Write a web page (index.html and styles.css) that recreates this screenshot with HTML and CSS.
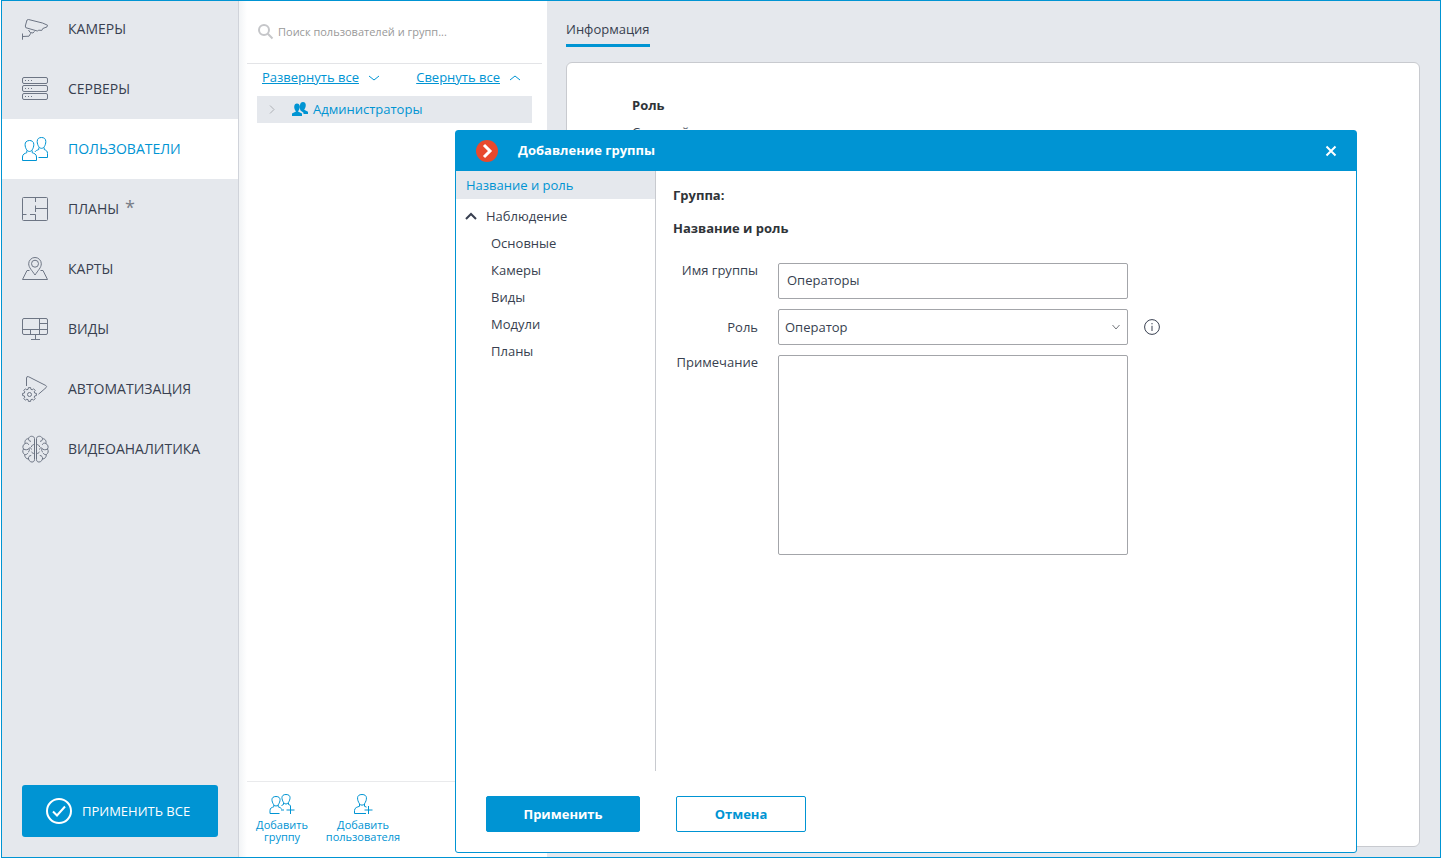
FILE: index.html
```html
<!DOCTYPE html>
<html lang="ru">
<head>
<meta charset="utf-8">
<title>Пользователи</title>
<link rel="stylesheet" href="styles.css">
</head>
<body>
<svg class="sprite" aria-hidden="true">
  <symbol id="users" viewBox="0 0 28 28">
    <path d="M8.500 5.500c2 0 4.300 1 4.300 3.800 0 2.200-.6 4-1.600 5.500-1.500 2.200-4 2.200-5.500 0-1-1.500-1.600-3.300-1.600-5.200 0-2.300 1.200-3.900 4.400-4.100zM5.800 15.500v2.200c-2 .8-4.300 1.300-4.300 4.300v3.500h14v-3.500c0-3-2.300-3.500-4.300-4.300v-2.200"/>
    <path d="M20.500 2.500c2.500 0 4.300 1.200 4.300 4 0 2-.6 3.800-1.500 5.200-1.500 2.200-4 2.200-5.500 0-.9-1.400-1.600-3.200-1.600-5.200 0-2.800 1.800-4 4.300-4zM17.800 12.500v2c-1.600.7-3 1-3.800 2.300M23.200 12.500v2c2 .8 3.300 1.500 3.300 4v4h-9"/>
  </symbol>
</svg>

<div class="app">
  <aside class="sidebar">
    <nav class="menu">
      <a class="menu-item" href="#"><svg class="menu-icon" viewBox="0 0 28 28"><path d="M7.500 4.500 21.500 8l5 2.200-.5 1.700-4.200 1.600-1 1.900-3-.2-1.500.8L4.800 12.700 4.300 11 6 5zM7.500 15l1.700 2.500 2.800.5 1.500-1.700M9.800 18.200l-1.800 3-6.500.3M1.500 18.500v6.200"/></svg>КАМЕРЫ</a>
      <a class="menu-item" href="#"><svg class="menu-icon" viewBox="0 0 28 28"><rect x="1.500" y="2.500" width="25" height="6" rx="1.500"/><rect x="1.500" y="10.500" width="25" height="6" rx="1.500"/><rect x="1.500" y="18.500" width="25" height="6" rx="1.500"/><path d="M4 5.500h1M7 5.500h1M10 5.500h1M4 13.500h1M7 13.500h1M10 13.500h1M4 21.500h1M7 21.500h1M10 21.500h1"/></svg>СЕРВЕРЫ</a>
      <a class="menu-item active" href="#" aria-current="page"><svg class="menu-icon"><use href="#users"/></svg>ПОЛЬЗОВАТЕЛИ</a>
      <a class="menu-item" href="#"><svg class="menu-icon" viewBox="0 0 28 28"><rect x="1.500" y="2.500" width="25" height="23" rx="1"/><path d="M14.500 2.500v4.500M14.500 10.500v6.500M14.500 13.500h12M1.500 19.500h4M9 19.500h5.500v6"/></svg>ПЛАНЫ <span class="mark">*</span></a>
      <a class="menu-item" href="#"><svg class="menu-icon" viewBox="0 0 28 28"><path d="M14 20C11 15.500 7.700 12.500 7.700 8.800a6.300 6.300 0 0 1 12.600 0c0 3.700-3.300 6.700-6.300 11.200zM8.500 15.500H6l-4.500 9h25l-4.500-9h-2.500"/><circle cx="14" cy="8.700" r="3.500"/></svg>КАРТЫ</a>
      <a class="menu-item" href="#"><svg class="menu-icon" viewBox="0 0 28 28"><rect x="1.500" y="3.500" width="25" height="16" rx="1.500"/><path d="M18.500 3.500v16M18.500 8.500h8M1.500 14.500h25M9.500 14.500v5M14.500 19.500v5M10 24.500h9"/></svg>ВИДЫ</a>
      <a class="menu-item" href="#"><svg class="menu-icon" viewBox="0 0 28 28"><path d="M5.500 11V3q0-2 2-1.300L24.800 10.500q1.500 1 .2 2.200l-7.500 6.500"/><g transform="translate(8.500 19.500)"><path d="M6.900-1.100v2.200L5.200 1.400 4.700 2.700 5.700 4.100 4.100 5.700 2.700 4.700 1.400 5.200 1.100 6.900h-2.200L-1.400 5.200-2.700 4.700-4.100 5.700-5.700 4.100-4.700 2.700-5.200 1.400-6.900 1.100v-2.200L-5.200-1.400-4.700-2.700-5.700-4.100-4.100-5.700-2.700-4.700-1.400-5.200-1.100-6.900h2.200L1.400-5.200 2.700-4.700 4.100-5.700 5.700-4.100 4.700-2.700 5.200-1.400z"/><circle r="2"/></g></svg>АВТОМАТИЗАЦИЯ</a>
      <a class="menu-item" href="#"><svg class="menu-icon" viewBox="0 0 28 28"><g id="half"><path d="M13.500 3.500c0-2.500-5-3.500-6 .2C5 3.500 3.300 6 4.200 8.500c-2.200 1-3 3.500-1.700 5.500-1.300 2-.8 4.500 1.200 5.500-.2 2.500 1.500 4.500 3.800 4.500 1 3.800 6 4.200 6 .5z"/><path d="M7.500 3.700c0 1.800 1 2.600 2.500 2.600M4.200 8.500c1.500-.8 3-.3 3.500 1.300M13.500 9.500c-1.700 0-2.700.8-3.200 2.500M2.500 14c2 1.300 4.500.8 5.500-.5s2-1 2.500 1M8 13.500c.8 1.500.3 3-1 3.800M3.700 19.500c1.500.3 2.600-.2 3-1.500M7.500 24c-.3-2 .7-3.500 2.700-3.500M13.500 18.500c-1.500 0-2.500-.5-3-1.800"/></g><use href="#half" transform="matrix(-1 0 0 1 29 0)"/></svg>ВИДЕОАНАЛИТИКА</a>
    </nav>
    <button class="apply-all" type="button"><svg class="menu-icon" viewBox="0 0 28 28"><circle cx="14" cy="14" r="12"/><path d="m8 14.500 4 4 8-9"/></svg>ПРИМЕНИТЬ ВСЕ</button>
  </aside>

  <section class="users">
    <label class="search">
      <svg class="search-icon" viewBox="0 0 16 16"><circle cx="6" cy="6" r="5"/><path d="m9.800 9.800 4.700 4.700"/></svg>
      <input type="search" aria-label="Поиск" placeholder="Поиск пользователей и групп...">
    </label>
    <div class="fold">
      <a href="#">Развернуть все</a><svg class="chevron" viewBox="0 0 12 12"><path d="m1 5 5 4 5-4"/></svg>
      <a class="collapse" href="#">Свернуть все</a><svg class="chevron" viewBox="0 0 12 12"><path d="m1 9 5-4 5 4"/></svg>
    </div>
    <ul class="tree">
      <li class="tree-item"><svg class="arrow" viewBox="0 0 12 12"><path d="m4 2.500 4 4-4 4"/></svg><svg class="group-icon" viewBox="0 0 16 16"><path d="M0 15v-2.500l4-2C1.500 7.500 1.500 2.500 5 2.500s3.500 5 1 8l4 2V15zM8.500 9.500C7.300 6 7.500 1 11 1s3.500 5 1.200 7.700l3.800 2V13h-4.500v-1.200z"/></svg>Администраторы</li>
    </ul>
    <div class="add-bar">
      <button class="add add-group" type="button"><svg class="add-icon" viewBox="0 0 28 24"><path d="M8 4.500c5.500 0 4.500 5 2.200 8.300-1 1.600-3.400 1.600-4.400 0C3.500 9.500 2.500 4.500 8 4.500zM5.800 13v1.800c-2 .8-3.800 1-3.800 3.700v3h9.500M10.200 13v1.800c1.300.5 2.800 1 3.500 2.200M18 2.500c5.500 0 4.500 5 2.200 8.300-1 1.600-3.400 1.600-4.400 0-2.300-3.300-3.300-8.300 2.200-8.300zM20.500 11v1.500l2.200 1M15.500 11v1.500l-2 1M22.500 14v8M18.500 18h8M13 18h3"/></svg>Добавить группу</button>
      <button class="add add-user" type="button"><svg class="add-icon" viewBox="0 0 28 24"><path d="M13 2.500c6 0 5 5.500 2.500 9.300-1.200 1.800-3.800 1.800-5 0C8 8 7 2.500 13 2.500zM10.500 12v2.300C8.500 15 5.500 15.500 5.500 18.500v3h11.500M15.500 12v2.300l2 .8M19.500 14v8M15.500 18h8"/></svg>Добавить пользователя</button>
    </div>
  </section>

  <main class="details">
    <div class="tabs"><a class="tab" href="#">Информация</a></div>
    <article class="card">
      <h2>Роль</h2>
      <p>Старший администратор</p>
    </article>
  </main>

  <div class="dialog" role="dialog" aria-labelledby="dialog-title">
    <header class="dialog-head">
      <svg class="logo" viewBox="0 0 22 22"><circle cx="11" cy="11" r="11"/><path d="m8 5 6 6-6 6"/></svg>
      <h1 id="dialog-title">Добавление группы</h1>
      <button class="close" type="button" aria-label="Закрыть"><svg viewBox="0 0 12 12"><path d="m1.500 1.500 9 9M10.500 1.500l-9 9"/></svg></button>
    </header>
    <div class="dialog-body">
      <nav class="sections">
        <a class="section current" href="#">Название и роль</a>
        <a class="section parent" href="#"><svg viewBox="0 0 12 12"><path d="m1 9 5-5 5 5"/></svg>Наблюдение</a>
        <a class="section child" href="#">Основные</a>
        <a class="section child" href="#">Камеры</a>
        <a class="section child" href="#">Виды</a>
        <a class="section child" href="#">Модули</a>
        <a class="section child" href="#">Планы</a>
      </nav>
      <form class="form">
        <h2>Группа:</h2>
        <h2>Название и роль</h2>
        <div class="fields">
          <label class="top" for="name">Имя группы</label>
          <input class="field" id="name" type="text" value="Операторы">
          <label for="role">Роль</label>
          <div class="select-wrap">
            <select class="field" id="role"><option>Оператор</option></select>
            <svg class="select-arrow" viewBox="0 0 10 10"><path d="m1.500 3 3.500 4 3.500-4"/></svg>
          </div>
          <button class="info" type="button" aria-label="Справка о роли"><svg viewBox="0 0 16 16"><circle cx="8" cy="8" r="7.400"/><path d="M8 6.800V12M8 4v1.300"/></svg></button>
          <label class="top" for="note">Примечание</label>
          <textarea class="field" id="note"></textarea>
        </div>
      </form>
    </div>
    <footer class="dialog-foot">
      <button class="btn primary" type="button">Применить</button>
      <button class="btn" type="button">Отмена</button>
    </footer>
  </div>
</div>
</body>
</html>
```
FILE: styles.css
```css
:root {
  --blue: #0094d3;
  --grey: #e5e8ed;
  --ink: #383f50;
  --line: #c8cacf;
}
* { box-sizing: border-box; }
body {
  margin: 0 0 0 1px;
  font: 13px/20px "Open Sans", "Noto Sans", sans-serif;
  color: var(--ink);
}
button, input, select, textarea { font: inherit; color: inherit; }
button { cursor: pointer; }
h1, h2, p, ul { margin: 0; padding: 0; }
h1, h2 { font-size: 13px; font-weight: 700; }
a { color: inherit; text-decoration: none; }
svg { flex: none; fill: none; stroke: currentColor; }
.sprite { position: absolute; width: 0; height: 0; }

.app {
  position: relative;
  display: flex;
  height: 100vh;
  border: 1px solid var(--blue);
  background: var(--grey);
  overflow: hidden;
}

.sidebar {
  display: flex;
  flex-direction: column;
  justify-content: space-between;
  width: 237px;
  border-right: 1px solid #d0d3da;
}
.menu { margin-top: -2px; }
.menu-item {
  display: flex;
  align-items: center;
  gap: 19px;
  height: 60px;
  padding-left: 19px;
  font-size: 14px;
}
.menu-icon { width: 28px; height: 28px; color: #6d7584; }
.active { background: #fff; color: var(--blue); }
.active .menu-icon { color: inherit; }
.mark { margin: -4px 0 0 -13px; font-size: 18px; color: #777c86; }
.apply-all {
  display: flex;
  align-items: center;
  gap: 9px;
  height: 52px;
  margin: 0 20px 20px;
  padding: 0 0 0 23px;
  border: 0;
  border-radius: 3px;
  background: var(--blue);
  color: #fff;
}
.apply-all .menu-icon { color: #fff; stroke-width: 2; }

.users {
  display: flex;
  flex-direction: column;
  width: 308px;
  padding: 0 5px 0 8px;
  background: linear-gradient(90deg, #f2f4f6, #fff 8px);
}
.search {
  display: flex;
  align-items: center;
  gap: 4px;
  height: 63px;
  padding-left: 11px;
  border-bottom: 1px solid #e3e4e7;
}
.search-icon { width: 16px; height: 16px; color: #c5c6c9; stroke-width: 2; }
.search input { flex: 1; min-width: 0; padding: 0; border: 0; outline: 0; background: none; font-size: 11px; }
.search input::placeholder { color: #999; }
.fold {
  display: flex;
  align-items: center;
  gap: 9px;
  height: 26px;
  padding: 0 21px 0 15px;
  color: var(--blue);
}
.fold a { text-decoration: underline; }
.collapse { margin-left: auto; }
.chevron { width: 12px; height: 12px; }
.tree { flex: 1; margin: 6px 10px 0; list-style: none; }
.tree-item {
  display: flex;
  align-items: center;
  height: 27px;
  padding: 0 0 2px 9px;
  background: var(--grey);
  color: var(--blue);
}
.arrow { width: 12px; height: 12px; margin-right: 14px; color: #aeb1b6; }
.group-icon { width: 16px; height: 16px; margin-right: 5px; fill: currentColor; stroke: none; }
.add-bar {
  display: flex;
  gap: 16px;
  height: 76px;
  padding: 10px 8px 0;
  border-top: 1px solid #e9eaec;
}
.add {
  display: flex;
  flex-direction: column;
  align-items: center;
  padding: 0;
  border: 0;
  background: none;
  color: var(--blue);
  font-size: 11px;
  line-height: 12px;
}
.add-group { width: 54px; }
.add-user { width: 76px; }
.add-icon { width: 28px; height: 24px; margin-bottom: 3px; }

.details { display: flex; flex: 1; flex-direction: column; padding: 18px 20px 10px 19px; }
.tab {
  display: inline-block;
  height: 28px;
  border-bottom: 3px solid var(--blue);
}
.tabs { height: 43px; }
.card {
  flex: 1;
  padding: 32px 65px;
  border: 1px solid var(--line);
  border-radius: 6px;
  background: #fff;
}
.card h2 { margin-bottom: 7px; color: #2f3438; }

.dialog {
  position: absolute;
  inset: 129px 83px 4px 453px;
  display: flex;
  flex-direction: column;
  border: 1px solid var(--blue);
  border-radius: 3px;
  background: #fff;
}
.dialog-head {
  display: flex;
  align-items: center;
  height: 40px;
  padding: 0 19px 0 20px;
  background: var(--blue);
  color: #fff;
}
.dialog-head h1 { padding-bottom: 2px; }
.logo { width: 22px; height: 22px; margin-right: 20px; stroke: none; }
.logo circle { fill: #e8492d; }
.logo path { stroke: #fff; stroke-width: 3; }
.close { display: flex; margin-left: auto; padding: 0; border: 0; background: none; color: #fff; }
.close svg { width: 12px; height: 12px; stroke-width: 2; }
.dialog-body { display: flex; flex: 1; }
.sections { width: 200px; border-right: 1px solid var(--line); }
.section { display: flex; align-items: center; height: 27px; }
.current { height: 28px; margin-bottom: 3px; padding-left: 10px; background: var(--grey); color: var(--blue); }
.parent { gap: 9px; padding-left: 9px; }
.parent svg { width: 12px; height: 12px; stroke-width: 2; }
.child { padding-left: 35px; }
.form { flex: 1; padding: 14px 17px; }
.form h2 { margin-bottom: 13px; color: #2f3438; }
.fields {
  display: grid;
  grid-template-columns: 85px 350px 16px;
  column-gap: 20px;
  row-gap: 10px;
  align-items: center;
  padding-top: 12px;
}
.fields label { grid-column: 1; text-align: right; }
.fields .top { align-self: start; margin-top: -3px; }
.field {
  width: 100%;
  height: 36px;
  padding: 0 8px 2px;
  border: 1px solid #a3a5a9;
  border-radius: 2px;
  background: #fff;
}
.select-wrap { position: relative; display: flex; }
select.field { padding: 0 6px 1px; appearance: none; }
textarea.field { height: 200px; resize: none; }
.select-arrow { position: absolute; top: 13px; right: 7px; width: 10px; height: 10px; color: #74777d; pointer-events: none; }
.info { display: flex; margin-left: -4px; padding: 0; border: 0; background: none; }
.info svg { width: 16px; height: 16px; }
.dialog-foot { display: flex; gap: 36px; padding: 25px 30px 20px; }
.btn {
  width: 130px;
  height: 36px;
  padding: 0;
  border: 1px solid var(--blue);
  border-radius: 2px;
  background: #fff;
  color: var(--blue);
  font-weight: 700;
}
.primary { width: 154px; background: var(--blue); color: #fff; }
```
